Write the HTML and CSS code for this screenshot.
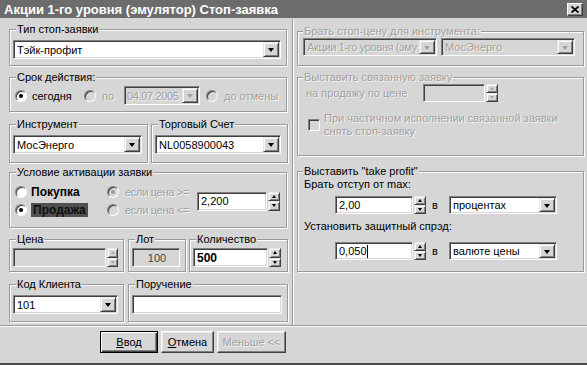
FILE: index.html
```html
<!DOCTYPE html>
<html lang="ru">
<head>
    <meta charset="UTF-8">
    <title>Стоп-заявка</title>
    <link rel="stylesheet" href="styles.css">
</head>
<body>
<div class="window">
    <div class="titlebar">
        <span class="title">Акции 1-го уровня (эмулятор) Стоп-заявка</span>
        <span class="close">
            <svg width="8" height="7" viewBox="0 0 8 7"><path d="M0.5 0.5 L7.5 6.5 M7.5 0.5 L0.5 6.5" stroke="#000" stroke-width="1.8"/></svg>
        </span>
    </div>

    <div class="main">
        <div class="panel left">
            <fieldset class="g g-type">
                <legend>Тип стоп-заявки</legend>
                <div class="field combo w-type"><span class="val">Тэйк-профит</span><span class="drop"></span></div>
            </fieldset>

            <fieldset class="g g-term">
                <legend>Срок действия:</legend>
                <div class="row">
                    <label class="opt o-today"><span class="radio on"></span>сегодня</label>
                    <label class="opt o-till dis"><span class="radio off"></span>по</label>
                    <div class="field combo off w-date"><span class="val tight">04.07.2005</span><span class="drop off"></span></div>
                    <label class="opt o-cancel dis"><span class="radio off"></span>до отмены</label>
                </div>
            </fieldset>

            <div class="pair">
                <fieldset class="g g-inst">
                    <legend>Инструмент</legend>
                    <div class="field combo w-inst"><span class="val">МосЭнерго</span><span class="drop"></span></div>
                </fieldset>
                <fieldset class="g g-acct">
                    <legend>Торговый Счет</legend>
                    <div class="field combo w-acct"><span class="val">NL0058900043</span><span class="drop"></span></div>
                </fieldset>
            </div>

            <fieldset class="g g-cond">
                <legend>Условие активации заявки</legend>
                <div class="cond">
                    <label class="opt bold c1"><span class="radio"></span>Покупка</label>
                    <label class="opt dis c2"><span class="radio on off"></span>если цена &gt;=</label>
                    <div class="spinbox c3">
                        <div class="field w-cond"><span class="val">2,200</span></div>
                        <div class="spin"><span class="sb up"></span><span class="sb down"></span></div>
                    </div>
                    <label class="opt bold c1"><span class="radio on"></span><span class="sel">Продажа</span></label>
                    <label class="opt dis c2"><span class="radio off"></span>если цена &lt;=</label>
                </div>
            </fieldset>

            <div class="pair">
                <fieldset class="g g-price">
                    <legend>Цена</legend>
                    <div class="spinbox">
                        <div class="field off w-price"></div>
                        <div class="spin"><span class="sb up off"></span><span class="sb down off"></span></div>
                    </div>
                </fieldset>
                <fieldset class="g g-lot">
                    <legend>Лот</legend>
                    <div class="field off ro w-lot"><span class="val">100</span></div>
                </fieldset>
                <fieldset class="g g-qty">
                    <legend>Количество</legend>
                    <div class="spinbox">
                        <div class="field w-qty"><span class="val bold">500</span></div>
                        <div class="spin"><span class="sb up"></span><span class="sb down"></span></div>
                    </div>
                </fieldset>
            </div>

            <div class="pair">
                <fieldset class="g g-client">
                    <legend>Код Клиента</legend>
                    <div class="field combo w-client"><span class="val">101</span><span class="drop"></span></div>
                </fieldset>
                <fieldset class="g g-note">
                    <legend>Поручение</legend>
                    <div class="field w-note"></div>
                </fieldset>
            </div>
        </div>

        <div class="panel right">
            <fieldset class="g r-src dis-g">
                <legend>Брать стоп-цену для инструмента:</legend>
                <div class="row gap4">
                    <div class="field combo off w-src"><span class="val tight">Акции 1-го уровня (эму</span><span class="drop off"></span></div>
                    <div class="field combo off w-src"><span class="val">МосЭнерго</span><span class="drop off"></span></div>
                </div>
            </fieldset>

            <fieldset class="g r-link dis-g">
                <legend>Выставить связанную заявку</legend>
                <div class="row link-row">
                    <span class="lbl dis w-lbl">на продажу по цене</span>
                    <div class="spinbox">
                        <div class="field off w-link"></div>
                        <div class="spin"><span class="sb up off"></span><span class="sb down off"></span></div>
                    </div>
                </div>
                <label class="check-row dis">
                    <span class="check"></span>
                    <span>При частичном исполнении связанной заявки<br>снять стоп-заявку</span>
                </label>
            </fieldset>

            <fieldset class="g r-tp">
                <legend>Выставить "take profit"</legend>
                <div class="lbl tp-l1">Брать отступ от max:</div>
                <div class="row tp-row">
                    <div class="spinbox">
                        <div class="field w-tp"><span class="val">2,00</span></div>
                        <div class="spin"><span class="sb up"></span><span class="sb down"></span></div>
                    </div>
                    <span class="in">в</span>
                    <div class="field combo w-unit"><span class="val">процентах</span><span class="drop"></span></div>
                </div>
                <div class="lbl tp-l2">Установить защитный спрэд:</div>
                <div class="row tp-row tp-r2">
                    <div class="spinbox">
                        <div class="field w-tp"><span class="val fit">0,050</span><span class="caret"></span></div>
                        <div class="spin"><span class="sb up"></span><span class="sb down"></span></div>
                    </div>
                    <span class="in">в</span>
                    <div class="field combo w-unit"><span class="val">валюте цены</span><span class="drop"></span></div>
                </div>
            </fieldset>
        </div>
    </div>

    <div class="footer">
        <button class="btn def w-ok"><u>В</u>вод</button>
        <button class="btn w-cancel"><u>О</u>тмена</button>
        <button class="btn dis w-less">Меньше &lt;&lt;</button>
    </div>
</div>
</body>
</html>
```

FILE: styles.css
```css
* {
    box-sizing: border-box;
}

body {
    margin: 0;
    background: #fff;
    font: 11px "Liberation Sans", Arial, sans-serif;
    color: #000;
}

.window {
    width: 587px;
    height: 365px;
    background: #d6d6d6;
    display: flex;
    flex-direction: column;
    border-bottom: 2px solid #4a4a4a;
}

.titlebar {
    height: 18px;
    margin-bottom: 1px;
    background: #6c6c6c;
    display: flex;
    align-items: center;
    justify-content: space-between;
    padding: 0 4px 0 4px;
}

.title {
    color: #fff;
    font-weight: bold;
    font-size: 13px;
}

.close {
    width: 16px;
    height: 13px;
    background: #d6d6d6;
    border: 1px solid;
    border-color: #fff #404040 #404040 #fff;
    box-shadow: inset -1px -1px 0 #808080;
    display: flex;
    align-items: center;
    justify-content: center;
    margin-top: 1px;
}

.main {
    display: flex;
    height: 307px;
    border-bottom: 1px solid #9a9a9a;
    box-shadow: 0 1px 0 #fff;
}

.left {
    width: 293px;
    padding: 4px 0 0 9px;
    border-right: 1px solid #9a9a9a;
    box-shadow: 1px 0 0 #fff;
}

.right {
    flex: 1;
    padding: 6px 0 0 4px;
}

/* group boxes */
.g {
    margin: 0;
    padding: 0 5px 0 3px;
    border: 1px solid #9a9a9a;
    box-shadow: inset 1px 1px 0 #fff, 1px 1px 0 #fff;
    min-width: 0;
}

.g legend {
    padding: 0 1px;
    margin-left: 3px;
    line-height: 13px;
    background: #d6d6d6;
}

.right .g {
    padding: 0 5px;
}

.right .g legend {
    margin-left: 0;
}

.dis-g legend,
.dis,
.dis .val {
    color: #a2a2a2;
    text-shadow: 1px 1px 0 #f2f2f2;
}

.pair {
    display: flex;
}

.g-type { width: 278px; height: 43px; padding-top: 4px; }
.g-term { width: 278px; height: 41px; margin-top: 5px; padding-top: 2px; padding-right: 2px; }
.pair:nth-of-type(1) { margin-top: 6px; }
.g-inst { width: 139px; height: 45px; padding-top: 4px; }
.g-acct { width: 137px; height: 45px; padding-top: 4px; margin-left: 3px; }
.g-cond { width: 278px; height: 62px; margin-top: 3px; padding-top: 4px; }
.g-price { width: 115px; height: 39px; padding-top: 2px; }
.g-lot { width: 58px; height: 39px; padding-top: 2px; margin-left: 4px; }
.g-qty { width: 99px; height: 39px; padding-top: 2px; margin-left: 3px; }
.g-client { width: 115px; height: 44px; padding-top: 4px; }
.g-note { width: 160px; height: 44px; padding-top: 4px; margin-left: 4px; }
.g-cond + .pair { margin-top: 5px; }
.pair + .pair { margin-top: 6px; }

.r-src { width: 287px; height: 41px; padding-top: 4px; }
.r-link { width: 287px; height: 85px; margin-top: 5px; padding-top: 9px; }
.r-tp { width: 287px; height: 107px; margin-top: 9px; padding-top: 7px; }

/* fields */
.field {
    flex: none;
    height: 19px;
    background: #fff;
    border: 1px solid;
    border-color: #808080 #fff #fff #808080;
    box-shadow: inset 1px 1px 0 #404040, inset -1px -1px 0 #d6d6d6;
    padding: 0 1px 0 3px;
    display: flex;
    align-items: center;
    white-space: nowrap;
    overflow: hidden;
}

.field.off {
    background: #d6d6d6;
}

.field .val {
    flex: 1;
    overflow: hidden;
}

.field .val.fit {
    flex: none;
}

.val.tight {
    letter-spacing: -0.35px;
}

.off .val {
    color: #a2a2a2;
    text-shadow: 1px 1px 0 #f2f2f2;
}

.ro .val {
    color: #444;
    text-shadow: none;
    text-align: center;
}

.drop {
    flex: none;
    width: 16px;
    height: 15px;
    background: #d6d6d6;
    border: 1px solid;
    border-color: #e6e6e6 #404040 #404040 #e6e6e6;
    box-shadow: inset 1px 1px 0 #fff, inset -1px -1px 0 #808080;
    display: flex;
    align-items: center;
    justify-content: center;
}

.drop::after {
    content: "";
    border-left: 3.5px solid transparent;
    border-right: 3.5px solid transparent;
    border-top: 4px solid #000;
    margin-top: 1px;
}

.drop.off::after {
    border-top-color: #a2a2a2;
}

.caret {
    width: 1px;
    height: 13px;
    background: #000;
    margin-right: auto;
}

.spinbox {
    display: flex;
}

.spin {
    width: 12px;
    display: flex;
    flex-direction: column;
    margin-left: 1px;
}

.sb {
    flex: 1;
    background: #d6d6d6;
    border: 1px solid;
    border-color: #e6e6e6 #404040 #404040 #e6e6e6;
    box-shadow: inset 1px 1px 0 #fff, inset -1px -1px 0 #808080;
    display: flex;
    align-items: center;
    justify-content: center;
}

.sb.up::after {
    content: "";
    border-left: 2.5px solid transparent;
    border-right: 2.5px solid transparent;
    border-bottom: 3px solid #000;
}

.sb.down::after {
    content: "";
    border-left: 2.5px solid transparent;
    border-right: 2.5px solid transparent;
    border-top: 3px solid #000;
}

.sb.off.up::after { border-bottom-color: #a8a8a8; }
.sb.off.down::after { border-top-color: #a8a8a8; }

/* widths */
.w-type { width: 268px; }
.w-date { width: 76px; padding-left: 2px; }
.w-inst { width: 129px; }
.w-acct { width: 126px; }
.w-cond { width: 70px; }
.w-price { width: 93px; }
.w-lot { width: 48px; }
.w-qty { width: 75px; }
.w-client { width: 105px; }
.w-note { width: 150px; }
.w-src { width: 134px; height: 18px; }
.w-link { width: 62px; height: 18px; }
.w-tp { width: 78px; height: 18px; }
.w-unit { width: 108px; height: 18px; }

.w-src .drop,
.w-unit .drop {
    height: 14px;
}

/* options */
.row {
    display: flex;
    align-items: center;
}

.gap4 {
    gap: 4px;
}

.opt {
    display: flex;
    align-items: center;
    white-space: nowrap;
    flex: none;
}

.radio {
    flex: none;
    width: 12px;
    height: 12px;
    border-radius: 50%;
    background: #fff;
    border: 1px solid;
    border-color: #808080 #fff #fff #808080;
    box-shadow: inset 1px 1px 0 #404040;
    position: relative;
    margin-right: 5px;
}

.radio.on::after {
    content: "";
    position: absolute;
    left: 3px;
    top: 3px;
    width: 4px;
    height: 4px;
    border-radius: 50%;
    background: #000;
}

.radio.off {
    background: #d6d6d6;
}

.radio.off::after {
    background: #9a9a9a;
}

.dis .radio {
    margin-right: 6px;
}

.o-today { width: 69px; margin-left: 2px; }
.o-till { width: 40px; }
.o-cancel { margin-left: 6px; }

.cond {
    display: grid;
    grid-template-columns: 92px 92px auto;
    grid-template-rows: 18px 18px;
    align-items: center;
}

.c1 { padding-left: 2px; }
.c2 { padding-left: 2px; letter-spacing: -0.3px; }
.c3 { grid-row: 1 / 3; grid-column: 3; }

.bold {
    font-weight: bold;
    font-size: 12px;
}

.c1 .radio { margin-right: 4px; }

.sel {
    background: #505050;
    padding: 0 2px;
    color: #111;
}

.lbl {
    display: block;
    line-height: 13px;
    white-space: nowrap;
}

.w-lbl {
    margin-left: 3px;
    width: 117px;
}

.check-row {
    display: flex;
    align-items: center;
    margin-top: 10px;
    margin-left: 5px;
    line-height: 13px;
}

.check {
    flex: none;
    width: 12px;
    height: 12px;
    background: #d6d6d6;
    border: 1px solid;
    border-color: #808080 #fff #fff #808080;
    box-shadow: inset 1px 1px 0 #404040;
    margin-right: 4px;
}

.tp-l1 { margin-left: 1px; }
.tp-row { margin-top: 5px; padding-left: 32px; }
.tp-l2 { margin-left: 1px; margin-top: 6px; }
.tp-r2 { margin-top: 9px; }

.in {
    margin: 0 0 0 6px;
    width: 17px;
}

/* buttons */
.footer {
    flex: 1;
    display: flex;
    padding: 5px 0 0 100px;
}

.btn {
    height: 22px;
    padding: 0;
    font: 11px "Liberation Sans", Arial, sans-serif;
    color: #000;
    background: #d6d6d6;
    border: 1px solid;
    border-color: #fff #404040 #404040 #fff;
    box-shadow: inset -1px -1px 0 #808080, inset 1px 1px 0 #e8e8e8;
}

.btn.def {
    border: 1px solid #000;
    box-shadow: inset 1px 1px 0 #fff, inset -1px -1px 0 #404040, inset -2px -2px 0 #808080;
}

.btn.dis {
    color: #a2a2a2;
    text-shadow: 1px 1px 0 #f2f2f2;
}

.w-ok { width: 58px; }
.w-cancel { width: 53px; margin-left: 3px; }
.w-less { width: 69px; margin-left: 3px; }
```
